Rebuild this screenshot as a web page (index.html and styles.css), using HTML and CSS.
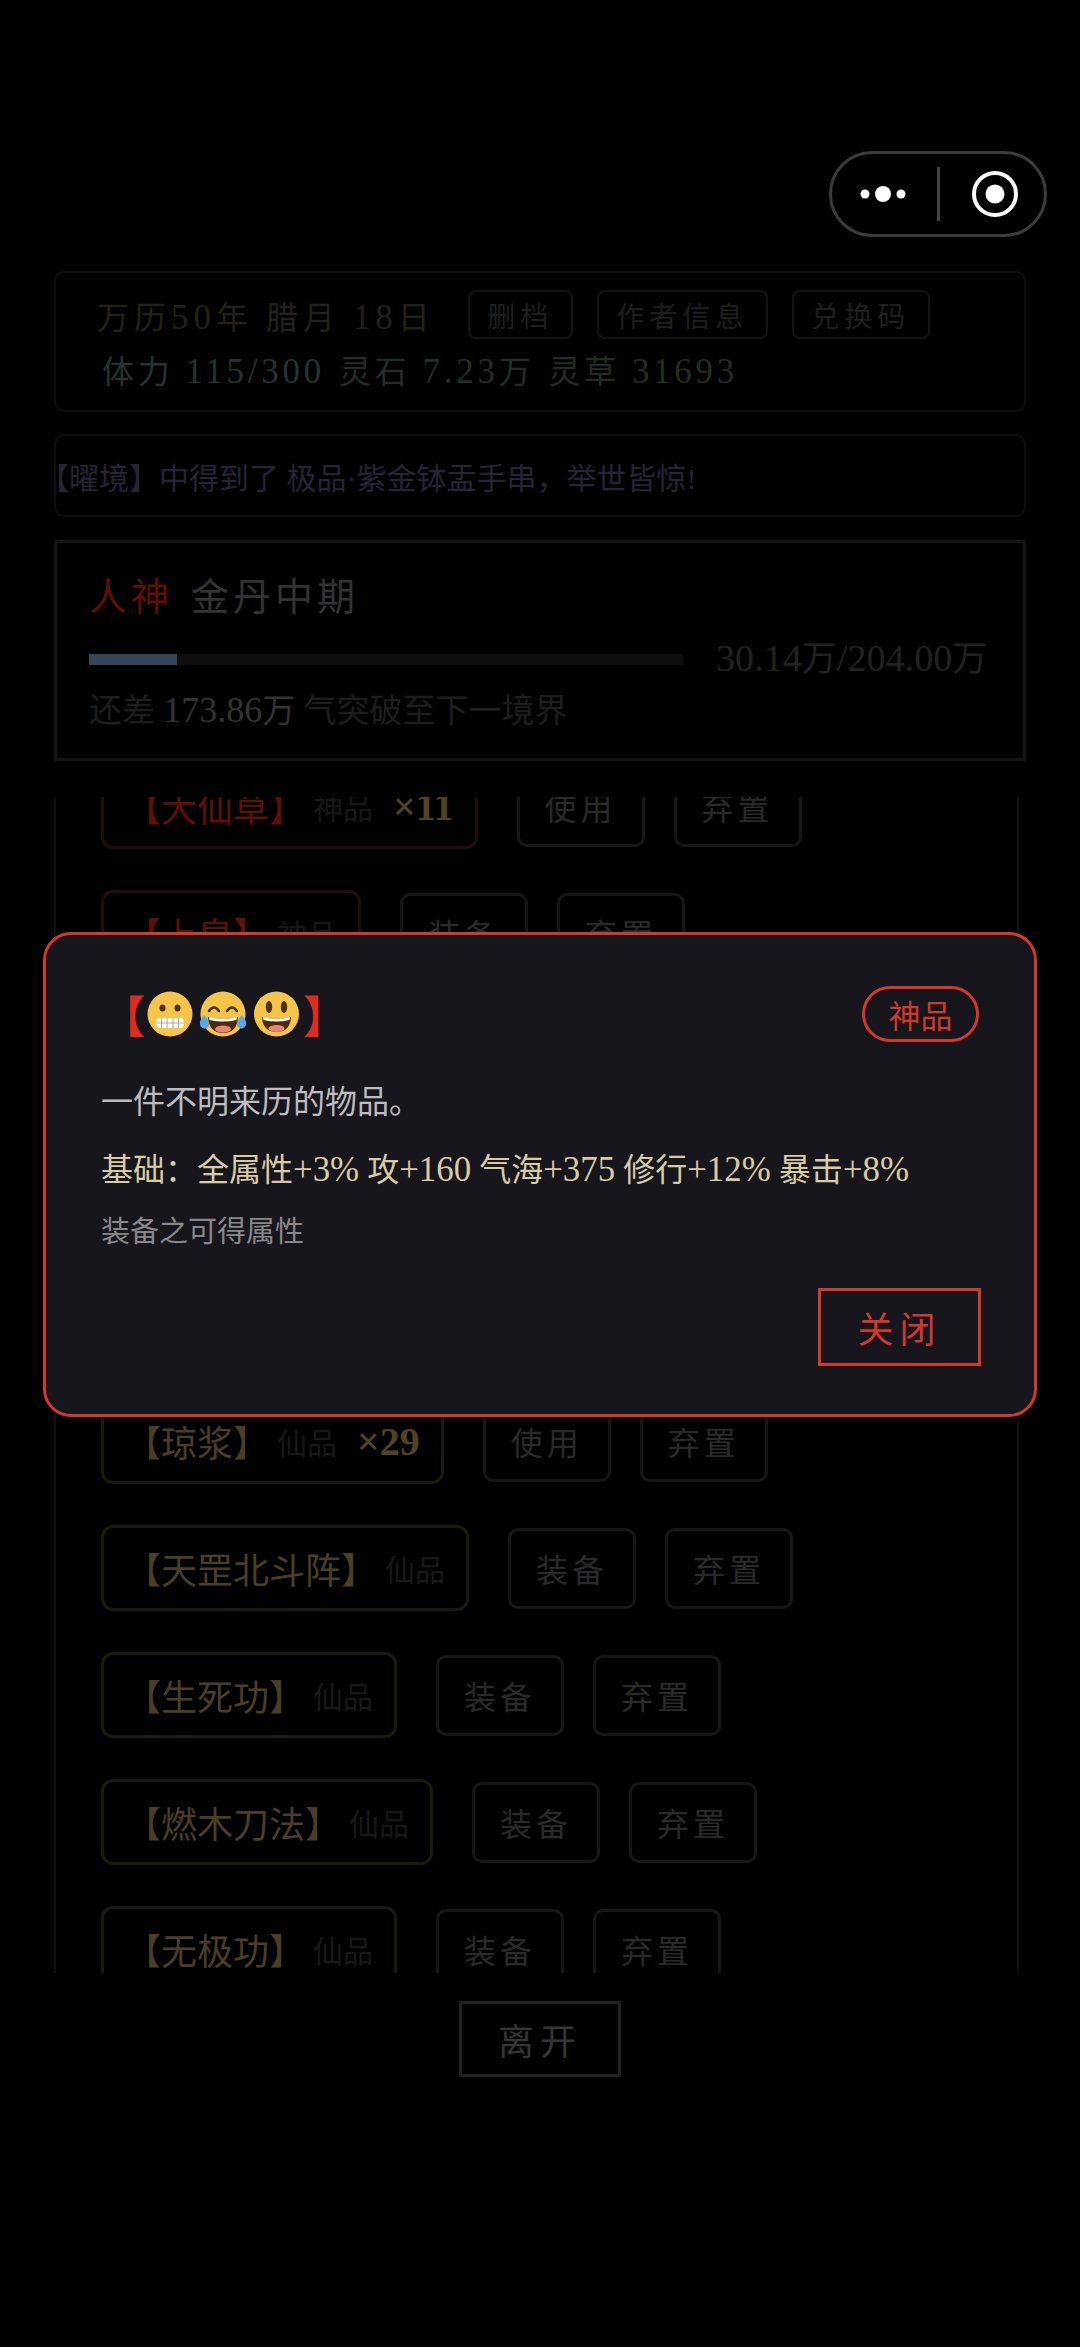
FILE: index.html
```html
<!DOCTYPE html>
<html lang="zh-CN">
<head>
    <meta charset="UTF-8">
    <meta name="viewport" content="width=device-width, initial-scale=1.0">
    <title>修仙</title>
    <link rel="stylesheet" href="styles.css">
</head>
<body>
    <!-- Mini program capsule -->
    <div class="capsule">
        <svg class="capsule-more" width="64" height="20" viewBox="0 0 64 20">
            <circle cx="6" cy="10" r="4.5" fill="#fff"/>
            <circle cx="24" cy="10" r="8" fill="#fff"/>
            <circle cx="42" cy="10" r="4.5" fill="#fff"/>
        </svg>
        <div class="capsule-line"></div>
        <svg class="capsule-close" width="48" height="48" viewBox="0 0 48 48">
            <circle cx="24" cy="24" r="21" fill="none" stroke="#fff" stroke-width="4"/>
            <circle cx="24" cy="24" r="9.5" fill="#fff"/>
        </svg>
    </div>

    <div class="page">
        <div class="card status">
            <div class="status-top">
                <span class="date">万历<span class="num">50</span>年 腊月 <span class="num">18</span>日</span>
                <button class="small-btn">删档</button>
                <button class="small-btn">作者信息</button>
                <button class="small-btn">兑换码</button>
            </div>
            <div class="status-res">
                <span class="res-a">体力 <span class="num">115/300</span></span>
                <span class="res-b">灵石 <span class="num">7.23</span>万</span>
                <span class="res-c">灵草 <span class="num">31693</span></span>
            </div>
        </div>

        <div class="card notice">
            <span class="notice-text">【曜境】中得到了 极品·紫金钵盂手串，举世皆惊!</span>
        </div>

        <div class="realm">
            <div class="realm-title"><span class="realm-god">人神</span><span class="realm-name">金丹中期</span></div>
            <div class="realm-bar">
                <div class="bar"><div class="bar-fill" style="width: 14.8%"></div></div>
                <span class="bar-text"><span class="num">30.14</span>万<span class="num">/204.00</span>万</span>
            </div>
            <div class="realm-tip">还差 <span class="realm-num"><span class="num">173.86</span>万</span> 气突破至下一境界</div>
        </div>

        <div class="list">
            <div class="row first-row">
                <div class="item god"><span class="item-name">【大仙草】</span><span class="item-grade">神品</span><span class="item-count">×11</span></div>
                <button class="act-btn">使用</button>
                <button class="act-btn">弃置</button>
            </div>
            <div class="row">
                <div class="item god"><span class="item-name">【上皇】</span><span class="item-grade">神品</span></div>
                <button class="act-btn">装备</button>
                <button class="act-btn">弃置</button>
            </div>
            <!-- rows under the popup -->
            <div class="list-gap"></div>
            <div class="row">
                <div class="item"><span class="item-name">【琼浆】</span><span class="item-grade">仙品</span><span class="item-count">×29</span></div>
                <button class="act-btn">使用</button>
                <button class="act-btn">弃置</button>
            </div>
            <div class="row">
                <div class="item"><span class="item-name">【天罡北斗阵】</span><span class="item-grade">仙品</span></div>
                <button class="act-btn">装备</button>
                <button class="act-btn">弃置</button>
            </div>
            <div class="row">
                <div class="item"><span class="item-name">【生死功】</span><span class="item-grade">仙品</span></div>
                <button class="act-btn">装备</button>
                <button class="act-btn">弃置</button>
            </div>
            <div class="row">
                <div class="item"><span class="item-name">【燃木刀法】</span><span class="item-grade">仙品</span></div>
                <button class="act-btn">装备</button>
                <button class="act-btn">弃置</button>
            </div>
            <div class="row">
                <div class="item"><span class="item-name">【无极功】</span><span class="item-grade">仙品</span></div>
                <button class="act-btn">装备</button>
                <button class="act-btn">弃置</button>
            </div>
        </div>

        <button class="leave-btn">离开</button>
    </div>

    <!-- Item popup -->
    <div class="popup">
        <div class="popup-head">
            <div class="popup-title">
                <span class="bracket">【</span>
                <svg class="emoji" width="46" height="46" viewBox="0 0 46 46">
                    <circle cx="23" cy="23" r="22.5" fill="#f4c54a"/>
                    <ellipse cx="15.5" cy="17" rx="3" ry="3.6" fill="#4a3410"/>
                    <ellipse cx="30.5" cy="17" rx="3" ry="3.6" fill="#4a3410"/>
                    <rect x="9.5" y="27" width="27" height="10" rx="3" fill="#fff"/>
                    <path d="M9.5 32h27M14.5 27v10M20 27v10M26 27v10M31.5 27v10" stroke="#b8a88a" stroke-width="1.1"/>
                </svg>
                <svg class="emoji" width="48" height="46" viewBox="0 0 48 46">
                    <circle cx="24" cy="23" r="22.5" fill="#f4c54a"/>
                    <path d="M10 20q5-7 10 0M28 20q5-7 10 0" fill="none" stroke="#4a3410" stroke-width="2.6" stroke-linecap="round"/>
                    <path d="M9 26q15 4 30 0q-1 16-15 16t-15-16z" fill="#4a2a10"/>
                    <path d="M10 26q14 4 28 0l-.5 3q-13.5 3-27 0z" fill="#fff"/>
                    <ellipse cx="24" cy="38" rx="8" ry="3.6" fill="#e8856f"/>
                    <path d="M5 24q-5 6-4 9a4.5 4.5 0 0 0 9 0q0-4-5-9zM43 24q5 6 4 9a4.5 4.5 0 0 1-9 0q0-4 5-9z" fill="#5aa9e6"/>
                </svg>
                <svg class="emoji" width="47" height="46" viewBox="0 0 47 46">
                    <circle cx="23.5" cy="23" r="22.5" fill="#f4c54a"/>
                    <ellipse cx="16" cy="16" rx="3.2" ry="6" fill="#4a3410"/>
                    <ellipse cx="31" cy="16" rx="3.2" ry="6" fill="#4a3410"/>
                    <path d="M9 26q14.5 4 29 0q-1 15-14.5 15t-14.5-15z" fill="#4a2a10"/>
                    <path d="M10 26q13.5 4 27 0l-.5 3q-13 3-26 0z" fill="#fff"/>
                    <ellipse cx="23.5" cy="37.5" rx="8" ry="3.4" fill="#e8856f"/>
                </svg>
                <span class="bracket">】</span>
            </div>
            <span class="popup-tag">神品</span>
        </div>
        <div class="popup-desc">一件不明来历的物品。</div>
        <div class="popup-attr">基础：全属性<span class="num">+3%</span> 攻<span class="num">+160</span> 气海<span class="num">+375</span> 修行<span class="num">+12%</span> 暴击<span class="num">+8%</span></div>
        <div class="popup-note">装备之可得属性</div>
        <div class="popup-foot">
            <button class="close-btn">关闭</button>
        </div>
    </div>
</body>
</html>
```

FILE: styles.css
```css
body {
    margin: 0;
    background-color: #000;
    font-family: "Liberation Serif", "Noto Sans CJK SC", serif;
    color: #333;
}

button {
    font-family: inherit;
    background: none;
    padding: 0;
    cursor: pointer;
}

/* digits run a bit larger than the han text around them */
.num {
    font-size: 1.09em;
}

/* Capsule */
.capsule {
    position: absolute;
    top: 151px;
    left: 829px;
    width: 218px;
    height: 86px;
    box-sizing: border-box;
    border: 3px solid #3c3c3c;
    border-radius: 43px;
    display: flex;
    align-items: center;
}

.capsule-more {
    margin-left: 27px;
}

.capsule-line {
    width: 3px;
    height: 54px;
    background-color: #444;
    margin-left: 14px;
}

.capsule-close {
    margin-left: 31px;
}

.page {
    padding: 271px 54px 0;
    display: flex;
    flex-direction: column;
    height: 2347px;
    box-sizing: border-box;
    overflow: hidden;
}

.card {
    border: 2px solid #0f0f0f;
    border-radius: 10px;
    box-sizing: border-box;
}

/* Status */
.status {
    height: 141px;
    padding: 17px 0 0 41px;
}

.status-top {
    display: flex;
    align-items: center;
    height: 49px;
}

.date {
    font-size: 32px;
    letter-spacing: 5px;
    color: #242218;
    white-space: pre;
    margin-right: 33px;
}

.small-btn {
    height: 49px;
    padding: 0 17.5px;
    margin-right: 24px;
    border: 2px solid #141414;
    border-radius: 8px;
    font-size: 28px;
    letter-spacing: 5px;
    color: #1f1f1f;
}

.status-res {
    display: flex;
    gap: 14px;
    margin: 9px 0 0 5px;
    font-size: 32px;
    letter-spacing: 3.8px;
    line-height: 48px;
}

.res-a {
    color: #243434;
}

.res-b {
    color: #242e28;
}

.res-c {
    color: #212e24;
}

/* Notice */
.notice {
    height: 83px;
    margin-top: 22px;
    display: flex;
    align-items: center;
    overflow: visible;
}

.notice-text {
    margin-left: -17px;
    font-size: 30px;
    color: #262436;
    white-space: nowrap;
}

/* Realm */
.realm {
    height: 221px;
    margin-top: 23px;
    box-sizing: border-box;
    border: 3px solid #141414;
    padding: 26px 32px 0;
}

.realm-title {
    display: flex;
    align-items: center;
    gap: 18px;
    font-size: 38px;
    letter-spacing: 4px;
    line-height: 56px;
}

.realm-god {
    color: #5f1007;
}

.realm-name {
    color: #333;
}

.realm-bar {
    display: flex;
    align-items: center;
    height: 48px;
    margin-top: 10px;
}

.bar {
    width: 594px;
    height: 11px;
    background-color: #0e0e0e;
    flex-shrink: 0;
}

.bar-fill {
    height: 100%;
    background-color: #34465a;
}

.bar-text {
    margin-left: 33px;
    font-size: 35px;
    line-height: 48px;
    color: #222;
    white-space: nowrap;
}

.realm-tip {
    margin-top: 3px;
    font-size: 33px;
    line-height: 48px;
    color: #1e1e1e;
}

.realm-num {
    color: #333;
}

/* Bag list */
.list {
    width: 965px;
    height: 1176px;
    margin-top: 36px;
    flex-shrink: 0;
    box-sizing: border-box;
    border-left: 2px solid #101010;
    border-right: 2px solid #101010;
    padding-left: 45px;
    overflow: hidden;
}

.row {
    display: flex;
    align-items: center;
    height: 86px;
    margin-bottom: 41px;
}

.first-row {
    margin-top: -34px;
}

.list-gap {
    height: 381px;
}

.item {
    display: flex;
    align-items: center;
    height: 86px;
    box-sizing: border-box;
    border: 3px solid #1c1910;
    border-radius: 12px;
    padding: 0 21px;
    margin-right: 39px;
    white-space: nowrap;
}

.item.god {
    border-color: #200e0e;
}

.item-name {
    font-size: 36px;
    color: #4a3f24;
}

.god .item-name {
    color: #5f1007;
}

.item-grade {
    margin-left: 8px;
    font-size: 30px;
    color: #181818;
}

.item-count {
    margin-left: 20px;
    font-size: 40px;
    font-weight: bold;
    color: #514322;
}

.act-btn {
    width: 128px;
    height: 81px;
    box-sizing: border-box;
    margin-right: 29px;
    border: 3px solid #171717;
    border-radius: 10px;
    font-size: 32px;
    letter-spacing: 4px;
    color: #2a2a2a;
}

.leave-btn {
    width: 162px;
    height: 76px;
    margin: 28px 0 0 405px;
    box-sizing: border-box;
    border: 3px solid #222;
    font-size: 36px;
    letter-spacing: 6px;
    color: #363636;
}

/* Popup */
.popup {
    position: absolute;
    top: 932px;
    left: 43px;
    width: 994px;
    height: 485px;
    box-sizing: border-box;
    padding: 51px 53px 0 55px;
    background-color: #16161c;
    border: 3px solid #d0392c;
    border-radius: 28px;
}

.popup-head {
    display: flex;
    justify-content: space-between;
    align-items: center;
    height: 56px;
}

.popup-title {
    display: flex;
    align-items: center;
}

.bracket {
    font-size: 44px;
    font-weight: bold;
    color: #e02c1e;
    margin-right: -1px;
}

.emoji {
    margin: 0 3px;
}

.popup-tag {
    width: 117px;
    height: 56px;
    box-sizing: border-box;
    border: 3px solid #d0392c;
    border-radius: 28px;
    margin-right: 2px;
    display: flex;
    align-items: center;
    justify-content: center;
    font-size: 32px;
    color: #d0392c;
}

.popup-desc {
    margin-top: 36px;
    font-size: 32px;
    line-height: 48px;
    color: #bcbcbe;
}

.popup-attr {
    margin-top: 20px;
    font-size: 32px;
    line-height: 48px;
    color: #d6cba4;
    white-space: nowrap;
}

.popup-note {
    margin-top: 16px;
    font-size: 29px;
    line-height: 44px;
    color: #88888a;
}

.popup-foot {
    display: flex;
    justify-content: flex-end;
    margin-top: 34px;
}

.close-btn {
    width: 163px;
    height: 78px;
    box-sizing: border-box;
    border: 3px solid #d0392c;
    font-size: 36px;
    letter-spacing: 6px;
    color: #d0392c;
}
```
